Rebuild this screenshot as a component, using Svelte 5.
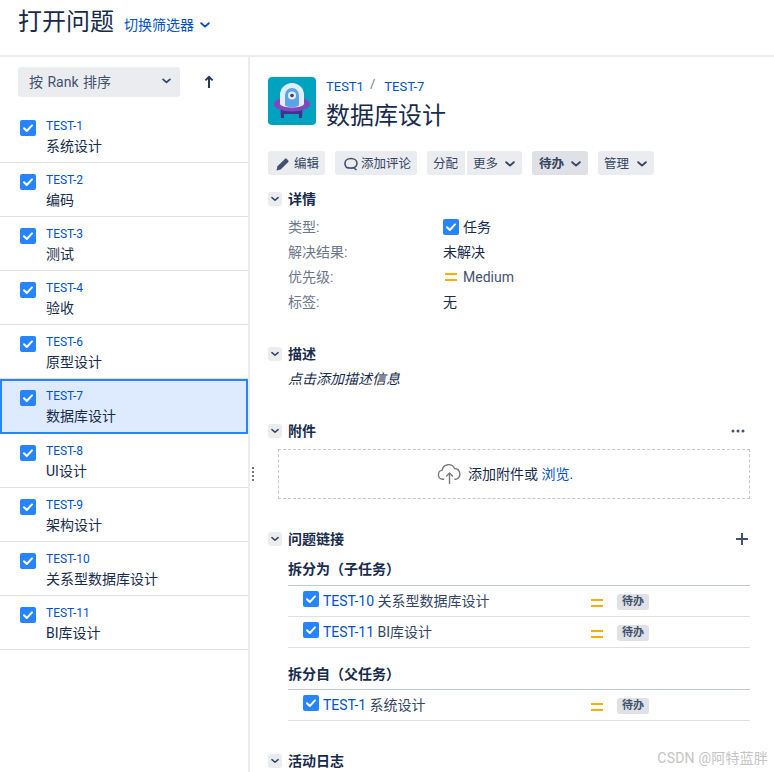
<script>
  const issues = [
    { key: 'TEST-1', name: '系统设计' },
    { key: 'TEST-2', name: '编码' },
    { key: 'TEST-3', name: '测试' },
    { key: 'TEST-4', name: '验收' },
    { key: 'TEST-6', name: '原型设计' },
    { key: 'TEST-7', name: '数据库设计', active: true },
    { key: 'TEST-8', name: 'UI设计' },
    { key: 'TEST-9', name: '架构设计' },
    { key: 'TEST-10', name: '关系型数据库设计' },
    { key: 'TEST-11', name: 'BI库设计' }
  ];
  const children = [
    { key: 'TEST-10', name: '关系型数据库设计' },
    { key: 'TEST-11', name: 'BI库设计' }
  ];
  const parents = [{ key: 'TEST-1', name: '系统设计' }];
</script>

{#snippet check()}
  <svg class="check" viewBox="0 0 16 16"><rect width="16" height="16" rx="2" fill="#2684ff"/><path d="M4 8.200l2.800 2.800L12 5.400" fill="none" stroke="#fff" stroke-width="2" stroke-linecap="round" stroke-linejoin="round"/></svg>
{/snippet}
{#snippet chev()}
  <svg class="chev" viewBox="0 0 10 6"><path d="M1.200 1.200L5 4.600l3.800-3.400" fill="none" stroke="currentColor" stroke-width="1.900" stroke-linecap="round" stroke-linejoin="round"/></svg>
{/snippet}
{#snippet prio()}
  <svg class="prio" viewBox="0 0 12 10"><path d="M0 2h12M0 8h12" stroke="#ffab00" stroke-width="2"/></svg>
{/snippet}
{#snippet heading(title)}
  <h3 class="sec-head"><span class="toggle">{@render chev()}</span>{title}</h3>
{/snippet}
{#snippet linkRow(item)}
  <li class="link-row">
    {@render check()}
    <span class="link-text"><a href="#top">{item.key}</a> {item.name}</span>
    {@render prio()}
    <span class="badge">待办</span>
  </li>
{/snippet}

<div class="page">
  <header class="top">
    <h1>打开问题</h1>
    <a class="filter" href="#top">切换筛选器 {@render chev()}</a>
  </header>

  <div class="body">
    <aside class="side">
      <div class="sort-row">
        <button class="sort">按 Rank 排序 {@render chev()}</button>
        <svg class="up" viewBox="0 0 12 14"><path d="M6 13V2M2.400 5.400L6 1.800l3.600 3.600" fill="none" stroke="#253858" stroke-width="2"/></svg>
      </div>
      <ul class="issues">
        {#each issues as it}
          <li class="issue" class:active={it.active}>
            {@render check()}
            <div>
              <a class="key" href="#top">{it.key}</a>
              <div class="name">{it.name}</div>
            </div>
          </li>
        {/each}
      </ul>
    </aside>

    <main class="main">
      <div class="title-row">
        <svg class="avatar" viewBox="0 0 48 48">
          <rect width="48" height="48" rx="4" fill="#00a3bf"/>
          <path d="M12.500 32h3.500v9h-3zM31 32h3.500l-.5 9h-3z" fill="#403294"/>
          <path d="M14 33h20v4H14z" fill="#403294"/>
          <ellipse cx="24" cy="27" rx="18.300" ry="7.500" fill="#8048c0"/>
          <path d="M12 27V18a12 12 0 0 1 24 0v9a12 3.500 0 0 1-24 0z" fill="#e3eefc"/>
          <path d="M17 28V18a7 7 0 0 1 14 0v10a7 2 0 0 1-14 0z" fill="#5ba4e6"/>
          <circle cx="24" cy="18.500" r="4" fill="#e3eefc"/>
          <circle cx="24" cy="18.500" r="1.800" fill="#403294"/>
        </svg>
        <div>
          <div class="crumbs"><a href="#top">TEST1</a><span class="sep">/</span><a href="#top">TEST-7</a></div>
          <h2>数据库设计</h2>
        </div>
      </div>

      <div class="toolbar">
        <button class="btn e">
          <svg viewBox="0 0 16 16" class="ico"><path d="M1.500 14.500l1-4.200 7.600-7.600a1 1 0 0 1 1.400 0l1.800 1.800a1 1 0 0 1 0 1.400l-7.600 7.600z" fill="#42526e"/></svg>编辑
        </button>
        <button class="btn c">
          <svg viewBox="0 0 16 16" class="ico"><path d="M8 2.500c3.400 0 6 2 6 4.800s-2.600 4.800-6 4.800c-.9 0-1.700-.1-2.400-.4C3 12.500 2.600 10 2.400 9.600 2.100 8.900 2 8.100 2 7.300 2 4.500 4.600 2.500 8 2.500z" fill="none" stroke="#42526e" stroke-width="1.600"/><path d="M11 12l2.500 2" stroke="#42526e" stroke-width="1.600"/></svg>添加评论
        </button>
        <div class="pair">
          <button class="btn assign">分配</button>
          <button class="btn more">更多 {@render chev()}</button>
        </div>
        <button class="btn todo">待办 {@render chev()}</button>
        <button class="btn manage">管理 {@render chev()}</button>
      </div>

      <section class="details">
        {@render heading('详情')}
        <dl>
          <dt>类型:</dt><dd>{@render check()}任务</dd>
          <dt>解决结果:</dt><dd>未解决</dd>
          <dt>优先级:</dt><dd>{@render prio()}<span class="medium">Medium</span></dd>
          <dt>标签:</dt><dd>无</dd>
        </dl>
      </section>

      <section class="desc">
        {@render heading('描述')}
        <p class="hint">点击添加描述信息</p>
      </section>

      <section class="attach">
        <div class="head-row">
          {@render heading('附件')}
          <svg class="dots" viewBox="0 0 14 4"><circle cx="2" cy="2" r="1.500"/><circle cx="7" cy="2" r="1.500"/><circle cx="12" cy="2" r="1.500"/></svg>
        </div>
        <div class="drop">
          <svg class="cloud" viewBox="0 0 26 24"><path d="M7.500 17.500H6a4.800 4.800 0 0 1-.6-9.500A6.800 6.800 0 0 1 18.300 6.300 5.700 5.700 0 0 1 19.500 17.500H18" fill="none" stroke="#7a7a7a" stroke-width="1.400"/><path d="M13 22.500V11.500M9.500 14.500l3.500-3.500 3.500 3.500" fill="none" stroke="#7a7a7a" stroke-width="1.400"/></svg>
          <span>添加附件或 <a href="#top">浏览</a>.</span>
        </div>
      </section>

      <section class="links">
        <div class="head-row">
          {@render heading('问题链接')}
          <svg class="plus" viewBox="0 0 12 12"><path d="M6 0v12M0 6h12" stroke="#42526e" stroke-width="2"/></svg>
        </div>
        <h4>拆分为（子任务）</h4>
        <ul class="link-list">{#each children as c}{@render linkRow(c)}{/each}</ul>
        <h4 class="second">拆分自（父任务）</h4>
        <ul class="link-list">{#each parents as p}{@render linkRow(p)}{/each}</ul>
      </section>

      <section class="log">
        {@render heading('活动日志')}
      </section>
    </main>
  </div>

  <span class="grip"></span>
  <span class="mark">CSDN @阿特蓝胖</span>
</div>

<style>
  :global(body) { margin: 0; background: #fff; }
  .page {
    position: relative;
    height: 772px;
    overflow: hidden;
    font: 14px/20px Roboto, "Noto Sans CJK SC", sans-serif;
    color: #172b4d;
  }
  a { color: #0052cc; text-decoration: none; }
  ul { list-style: none; margin: 0; padding: 0; }
  button { font: inherit; border: 0; padding: 0; }
  h1, h2, h3, h4, p, dl, dd { margin: 0; }
  .check { width: 16px; height: 16px; flex: none; }
  .chev { width: 10px; height: 6px; flex: none; }
  .prio { width: 12px; height: 10px; flex: none; }

  .top {
    box-sizing: border-box;
    padding: 6px 18px 0;
    display: flex;
    align-items: flex-start;
    gap: 10px;
    border-bottom: 2px solid #ebecf0;
    height: 57px;
  }
  h1 { font-size: 24px; line-height: 32px; font-weight: 400; }
  .filter { font-size: 14px; line-height: 20px; margin-top: 9px; display: flex; align-items: center; gap: 4px; }
  .filter .chev { margin-left: 2px; }

  .body { display: flex; height: 715px; }
  .side { width: 248px; flex: none; border-right: 2px solid #ebecf0; }
  .sort-row { display: flex; align-items: center; padding: 10px 0 11.500px 18px; }
  .sort {
    width: 162px; height: 30px; border-radius: 3px; background: #ebecf0; color: #42526e;
    display: flex; align-items: center; justify-content: space-between;
    padding: 0 9px 0 11px; box-sizing: border-box; font-size: 14px; word-spacing: 1px;
  }
  .sort .chev { color: #344563; margin-top: -2px; width: 9px; }
  .up { width: 12px; height: 14px; margin-left: 23px; }

  .issue {
    display: flex; gap: 10px; box-sizing: border-box; height: 54.200px;
    padding: 9px 0 0 20px; border-bottom: 1px solid #dfe1e6;
  }
  .issue .check { margin-top: 2px; }
  .key { display: block; font-size: 12px; line-height: 16px; }
  .name { font-size: 14px; line-height: 20px; margin-top: 2px; }
  .issue.active {
    background: #deebff; border: 2px solid #2684ff; padding: 7px 0 0 18px;
  }

  .main { flex: 1; padding: 20px 24px 0 18px; min-width: 0; }
  .title-row { display: flex; gap: 10px; }
  .avatar { width: 48px; height: 48px; flex: none; }
  .crumbs { font-size: 13px; line-height: 20px; display: flex; }
  .sep { color: #6b778c; margin: -3px 9px 0 6px; font-size: 13px; }
  h2 { font-size: 24px; line-height: 34px; font-weight: 400; margin-top: 2px; color: #172b4d; }

  .toolbar { display: flex; gap: 10px; margin-top: 18px; }
  .btn {
    height: 24px; border-radius: 3px; background: #ebecf0; color: #344563; font-size: 12.500px; line-height: 24px;
    display: flex; align-items: center; box-sizing: border-box; padding-top: 1px;
  }
  .ico { width: 16px; height: 16px; flex: none; }
  .e { width: 57px; padding-left: 7px; gap: 3px; }
  .c { width: 82px; padding-left: 8px; gap: 2px; }
  .pair { display: flex; gap: 2px; }
  .assign { width: 38px; padding-left: 6px; border-radius: 3px 0 0 3px; }
  .more { width: 55px; padding-left: 6px; justify-content: space-between; padding-right: 7px; border-radius: 0 3px 3px 0; }
  .todo { width: 56px; padding-left: 7px; padding-right: 7px; justify-content: space-between; background: #dfe1e6; font-weight: 700; }
  .manage { width: 56px; padding-left: 6px; padding-right: 7px; justify-content: space-between; }

  .sec-head {
    display: flex; align-items: center; gap: 6px; font-size: 14px; line-height: 20px; font-weight: 700; color: #172b4d;
  }
  .toggle {
    width: 14px; height: 14px; border-radius: 3px; background: #ebecf0; color: #344563;
    display: flex; align-items: center; justify-content: center;
  }
  .toggle .chev { width: 8px; }

  .details { margin-top: 14px; }
  dl {
    display: grid; grid-template-columns: 155px 1fr; grid-auto-rows: 25px; margin: 5px 0 0 20px; align-items: center;
  }
  dt { color: #6b778c; }
  dd { display: flex; align-items: center; gap: 4px; }
  dd .prio { margin: 0 2px 0 2px; }
  .medium { color: #42526e; }

  .desc { margin-top: 30px; }
  .hint { margin: 5px 0 0 20px; font-style: italic; color: #172b4d; }

  .attach { margin-top: 32px; }
  .head-row { display: flex; justify-content: space-between; align-items: center; }
  .dots { width: 14px; height: 4px; fill: #42526e; margin-right: 5px; }
  .drop {
    margin: 8px 0 0 10px; border: 1px dashed #c1c7d0; box-sizing: border-box; height: 50px; padding-right: 17px;
    display: flex; align-items: center; justify-content: center; gap: 6px; color: #172b4d;
  }
  .cloud { width: 25px; height: 24px; margin-left: -1px; }

  .links { margin-top: 30px; }
  .plus { width: 12px; height: 12px; margin-right: 2px; }
  h4 {
    font-size: 14px; line-height: 18px; font-weight: 700; margin: 11px 0 0 20px; padding-bottom: 7px;
    border-bottom: 1px solid #c1c7d0;
  }
  h4.second { margin-top: 16px; padding-top: 1px; padding-bottom: 6px; }
  .link-list { margin-left: 20px; }
  .link-row {
    display: flex; align-items: flex-start; height: 31px; box-sizing: border-box; border-bottom: 1px solid #dfe1e6; padding: 5px 0 0 15px;
  }
  .link-row .check { margin-right: 4px; }
  .link-text { width: 268px; flex: none; line-height: 20px; color: #344563; }
  .link-row .prio { margin: 7px 14px 0 0; }
  .badge {
    background: #dfe1e6; color: #42526e; font-size: 11px; line-height: 16px; font-weight: 700; border-radius: 3px;
    width: 32px; text-align: center; margin-top: 3px;
  }

  .log { margin-top: 30px; }

  .grip {
    position: absolute; left: 252px; top: 467px; width: 2px; height: 14px;
    background: repeating-linear-gradient(#6b778c 0 2px, transparent 2px 4px);
  }
  .mark {
    position: absolute; right: 6px; top: 748px; color: #c4c4c4; font-size: 14px; line-height: 20px; letter-spacing: 0.2px;
  }
</style>
